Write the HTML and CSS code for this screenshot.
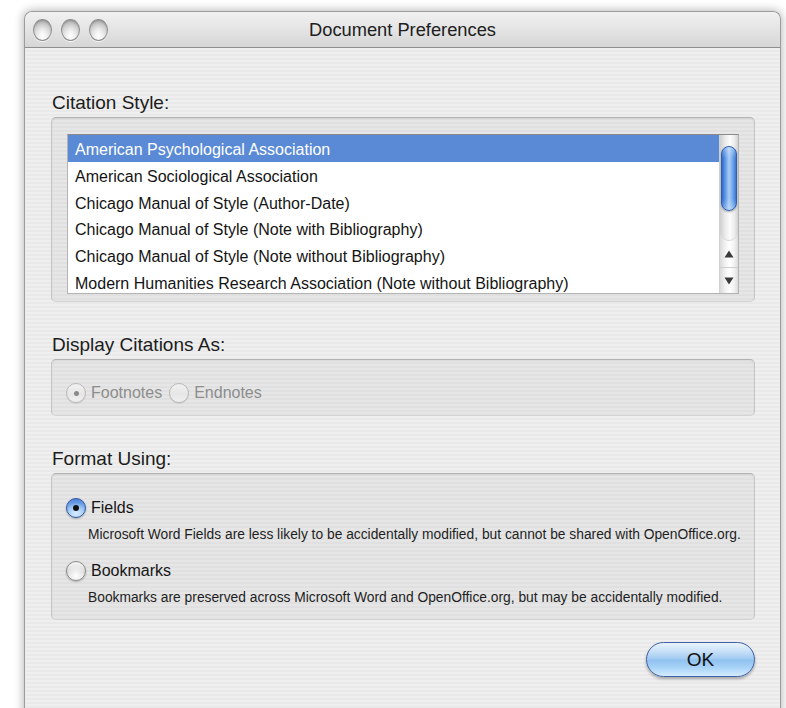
FILE: index.html
```html
<!DOCTYPE html>
<html lang="en">
<head>
<meta charset="utf-8">
<title>Document Preferences</title>
<link rel="stylesheet" href="styles.css">
</head>
<body>
<div class="window">
  <div class="titlebar">
    <div class="lights">
      <span class="light"></span>
      <span class="light"></span>
      <span class="light"></span>
    </div>
    <div class="title">Document Preferences</div>
    <div class="spacer"></div>
  </div>

  <div class="content">
    <div class="label">Citation Style:</div>
    <div class="group group-list">
      <div class="listbox">
        <ul class="items">
          <li class="selected">American Psychological Association</li>
          <li>American Sociological Association</li>
          <li>Chicago Manual of Style (Author-Date)</li>
          <li>Chicago Manual of Style (Note with Bibliography)</li>
          <li>Chicago Manual of Style (Note without Bibliography)</li>
          <li>Modern Humanities Research Association (Note without Bibliography)</li>
        </ul>
        <div class="scrollbar">
          <div class="track"><div class="thumb"></div></div>
          <div class="arrow">
            <svg width="10" height="8" viewBox="0 0 10 8"><polygon points="5,0.5 9.5,7.5 0.5,7.5" fill="#3a3a3a"/></svg>
          </div>
          <div class="arrow arrow-down">
            <svg width="10" height="8" viewBox="0 0 10 8"><polygon points="0.5,0.5 9.5,0.5 5,7.5" fill="#3a3a3a"/></svg>
          </div>
        </div>
      </div>
    </div>

    <div class="label label-gap">Display Citations As:</div>
    <div class="group group-display">
      <div class="choice disabled">
        <span class="radio radio-off checked"></span>
        <span>Footnotes</span>
      </div>
      <div class="choice disabled">
        <span class="radio radio-off"></span>
        <span>Endnotes</span>
      </div>
    </div>

    <div class="label label-gap">Format Using:</div>
    <div class="group group-format">
      <div class="option">
        <span class="radio radio-on"></span>
        <span>Fields</span>
      </div>
      <p class="desc">Microsoft Word Fields are less likely to be accidentally modified, but cannot be shared with OpenOffice.org.</p>
      <div class="option option-gap">
        <span class="radio"></span>
        <span>Bookmarks</span>
      </div>
      <p class="desc">Bookmarks are preserved across Microsoft Word and OpenOffice.org, but may be accidentally modified.</p>
    </div>

    <div class="actions">
      <button class="ok" type="button">OK</button>
    </div>
  </div>
</div>
</body>
</html>
```

FILE: styles.css
```css
* {
  box-sizing: border-box;
}

html, body {
  margin: 0;
  height: 708px;
  overflow: hidden;
  background: #ffffff;
}

body {
  padding: 11px 0 0 24px;
  font-family: "Liberation Sans", Arial, sans-serif;
  color: #1a1a1a;
}

/* ---- window frame ---- */
.window {
  width: 757px;
  height: 720px;
  border: 1px solid #9c9c9c;
  border-bottom: none;
  border-radius: 8px 8px 0 0;
  background: repeating-linear-gradient(to bottom, #efefef 0, #efefef 2px, #e9e9e9 2px, #e9e9e9 4px);
  box-shadow: 0 0 10px 1px rgba(0, 0, 0, 0.28);
  overflow: hidden;
}

.titlebar {
  height: 36px;
  display: grid;
  grid-template-columns: 1fr auto 1fr;
  align-items: center;
  border-bottom: 1px solid #8f8f8f;
  background: linear-gradient(to bottom, #f1f1f1 0%, #e4e4e4 50%, #d6d6d6 100%);
  border-radius: 7px 7px 0 0;
}

.lights {
  display: flex;
  gap: 9px;
  padding-left: 8px;
}

.light {
  width: 19px;
  height: 22px;
  border-radius: 50%;
  border: 1px solid #8e8e8e;
  background:
    radial-gradient(ellipse at 50% 78%, rgba(255, 255, 255, 0.95) 0, rgba(255, 255, 255, 0) 55%),
    linear-gradient(to bottom, #b9b9b9 0%, #d8d8d8 45%, #f3f3f3 100%);
  box-shadow: 0 1px 0 rgba(255, 255, 255, 0.8), inset 0 1px 2px rgba(0, 0, 0, 0.25);
}

.title {
  font-size: 18.3px;
  color: #202020;
  padding-top: 1px;
}

/* ---- dialog body ---- */
.content {
  padding: 43px 25px 0 26px;
}

.label {
  font-size: 19px;
  line-height: 24px;
  padding-left: 1px;
  margin-bottom: 2px;
  color: #1c1c1c;
}

.label-gap {
  margin-top: 31px;
}

.group {
  border: 1px solid #c4c4c4;
  border-top-color: #b2b2b2;
  border-bottom-color: #d3d3d3;
  border-radius: 5px;
  background: rgba(0, 0, 0, 0.035);
  box-shadow: inset 0 1px 2px rgba(0, 0, 0, 0.06);
}

/* ---- citation style list ---- */
.group-list {
  padding: 16px 15px 7px 15px;
}

.listbox {
  height: 160px;
  display: flex;
  background: #ffffff;
  border: 1px solid #b3b3b3;
  border-top-color: #8a8a8a;
  overflow: hidden;
}

.items {
  flex: 1;
  list-style: none;
  margin: 0;
  padding: 0;
  overflow: hidden;
}

.items li {
  height: 26.8px;
  padding: 4px 0 0 7px;
  line-height: 22.8px;
  font-size: 16px;
  white-space: nowrap;
  color: #141414;
}

.items li.selected {
  background: #5a8ad6;
  color: #ffffff;
}

.scrollbar {
  width: 19px;
  display: flex;
  flex-direction: column;
  border-left: 1px solid #d2d2d2;
  background: linear-gradient(to right, #dadada 0%, #f3f3f3 30%, #ffffff 55%, #f1f1f1 80%, #dcdcdc 100%);
}

.track {
  flex: 1;
  padding: 11px 1px 0 1px;
  border-bottom: 1px solid #d4d4d4;
  border-radius: 0 0 9px 9px;
  background: linear-gradient(to right, #cfcfcf 0%, #ececec 30%, #fbfbfb 55%, #ececec 80%, #d2d2d2 100%);
}

.thumb {
  height: 65px;
  border-radius: 8px;
  border: 1px solid #2d5fb5;
  background:
    linear-gradient(to bottom, rgba(255, 255, 255, 0.35) 0%, rgba(255, 255, 255, 0) 18%, rgba(255, 255, 255, 0) 82%, rgba(255, 255, 255, 0.3) 100%),
    linear-gradient(to right, #2f6acb 0%, #5a95e4 22%, #a9cdf6 50%, #6da5ea 78%, #3a74d0 100%);
  box-shadow: 0 1px 2px rgba(0, 0, 0, 0.3);
}

.arrow {
  height: 26px;
  display: flex;
  align-items: center;
  justify-content: center;
}

.arrow-down {
  border-top: 1px solid #cfcfcf;
}

/* ---- display citations as ---- */
.group-display {
  display: flex;
  align-items: center;
  gap: 7px;
  padding: 22px 14px 11px 14px;
}

.choice {
  height: 22px;
  display: flex;
  align-items: center;
  gap: 5px;
  font-size: 16px;
}

.choice.disabled {
  color: #8d8d8d;
}

/* ---- radio buttons ---- */
.radio {
  position: relative;
  flex: none;
  width: 20px;
  height: 20px;
  border-radius: 50%;
  border: 1px solid #8a8a8a;
  background:
    radial-gradient(circle at 50% 75%, #ffffff 0, rgba(255, 255, 255, 0) 60%),
    linear-gradient(to bottom, #f6f6f6 0%, #d9d9d9 55%, #e8e8e8 100%);
  box-shadow: 0 1px 2px rgba(0, 0, 0, 0.25);
}

.radio-off {
  border-color: #b9b9b9;
  background: linear-gradient(to bottom, #f2f2f2 0%, #e6e6e6 55%, #f0f0f0 100%);
  box-shadow: 0 1px 1px rgba(0, 0, 0, 0.1);
}

.radio-off.checked::after {
  content: "";
  position: absolute;
  left: 6.5px;
  top: 6.5px;
  width: 5px;
  height: 5px;
  border-radius: 50%;
  background: #8a8a8a;
}

.radio-on {
  border-color: #30559e;
  background:
    radial-gradient(circle at 50% 78%, #d7ecff 0, rgba(215, 236, 255, 0) 62%),
    linear-gradient(to bottom, #4f86dc 0%, #7fb0ee 45%, #a9d0f8 100%);
}

.radio-on::after {
  content: "";
  position: absolute;
  left: 6px;
  top: 6px;
  width: 6px;
  height: 6px;
  border-radius: 50%;
  background: #111111;
}

/* ---- format using ---- */
.group-format {
  padding: 22px 14px 12px 14px;
}

.option {
  height: 24px;
  display: flex;
  align-items: center;
  gap: 5px;
  font-size: 16px;
  color: #161616;
}

.option-gap {
  margin-top: 15px;
}

.desc {
  margin: 6px 0 0 22px;
  font-size: 13.8px;
  line-height: 18px;
  color: #1e1e1e;
  white-space: nowrap;
}

/* ---- buttons ---- */
.actions {
  display: flex;
  justify-content: flex-end;
  margin-top: 22px;
}

.ok {
  width: 109px;
  height: 35px;
  border-radius: 18px;
  border: 1px solid #3f5fa6;
  background:
    linear-gradient(to bottom, rgba(255, 255, 255, 0.7) 0%, rgba(255, 255, 255, 0.15) 48%, rgba(255, 255, 255, 0) 52%),
    linear-gradient(to bottom, #b4d6f7 0%, #8ec0ef 50%, #a9d3f8 75%, #d4ecff 100%);
  box-shadow: 0 2px 3px rgba(0, 0, 0, 0.3);
  font-family: "Liberation Sans", Arial, sans-serif;
  font-size: 19px;
  color: #111111;
  padding: 0;
}
```
